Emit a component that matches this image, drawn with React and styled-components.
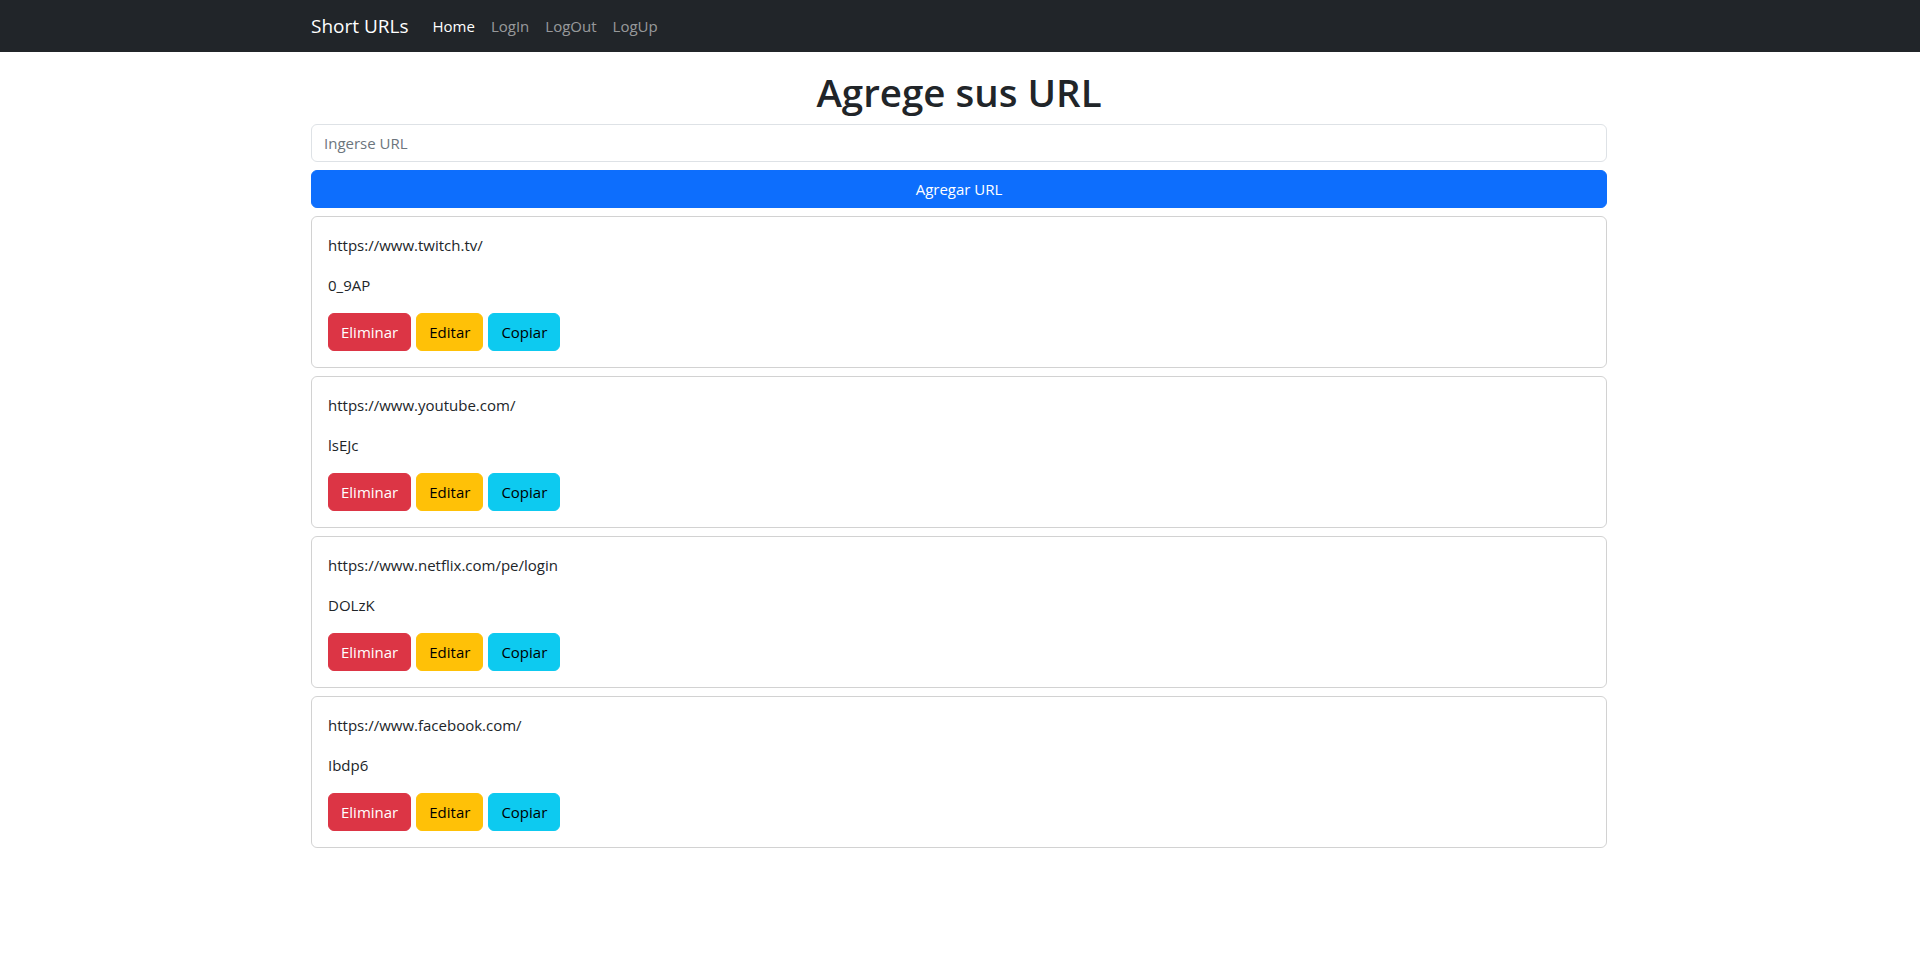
import React, { useState } from 'react';
import styled, { createGlobalStyle } from 'styled-components';

const GlobalStyle = createGlobalStyle`
  *, *::before, *::after {
    box-sizing: border-box;
  }

  body {
    margin: 0;
    background: #fff;
    color: #212529;
    font-family: "Segoe UI", "Open Sans", "Noto Sans", sans-serif;
    font-size: 15px;
    line-height: 24px;
  }
`;

const Navbar = styled.nav`
  height: 52px;
  background-color: #212529;
  display: flex;
  align-items: center;
`;

const Container = styled.div`
  width: 1296px;
  margin: 0 0 0 calc(50% - 649px);
`;

const NavInner = styled(Container)`
  display: flex;
  align-items: center;
`;

const Brand = styled.a`
  color: #fff;
  font-size: 19px;
  line-height: 30px;
  margin-right: 16px;
  text-decoration: none;
  cursor: pointer;
`;

const NavList = styled.div`
  display: flex;
  align-items: center;
`;

const NavLink = styled.a`
  padding: 8px;
  color: ${props => (props.$active ? '#fff' : 'rgba(255, 255, 255, 0.55)')};
  text-decoration: none;
  cursor: pointer;

  &:hover {
    color: rgba(255, 255, 255, 0.75);
  }
`;

const Main = styled(Container)`
  display: flex;
  flex-direction: column;
  gap: 8px;
  padding-top: 16px;
`;

const Title = styled.h1`
  margin: 0;
  text-align: center;
  font-size: 38.5px;
  font-weight: 600;
  line-height: 48px;
`;

const Input = styled.input`
  height: 38px;
  padding: 6px 12px;
  font: inherit;
  color: #212529;
  border: 1px solid #dee2e6;
  border-radius: 6px;
  outline: 0;

  &::placeholder {
    color: #6c757d;
  }

  &:focus {
    border-color: #86b7fe;
    box-shadow: 0 0 0 4px rgba(13, 110, 253, 0.25);
  }
`;

const colors = {
  primary: { bg: '#0d6efd', fg: '#fff' },
  danger: { bg: '#dc3545', fg: '#fff' },
  warning: { bg: '#ffc107', fg: '#000' },
  info: { bg: '#0dcaf0', fg: '#000' },
};

const Button = styled.button`
  height: 38px;
  padding: 6px 12px;
  font: inherit;
  line-height: 24px;
  border: 1px solid ${props => colors[props.$variant].bg};
  border-radius: 6px;
  background-color: ${props => colors[props.$variant].bg};
  color: ${props => colors[props.$variant].fg};
  cursor: pointer;
  width: ${props => (props.$block ? '100%' : 'auto')};
`;

const Card = styled.div`
  border: 1px solid rgba(0, 0, 0, 0.175);
  border-radius: 6px;
  padding: 16px;
`;

const Line = styled.p`
  margin: 0 0 16px;
`;

const Actions = styled.div`
  display: flex;
  gap: 5px;
`;

const initialUrls = [
  { origin: 'https://www.twitch.tv/', nanoid: '0_9AP' },
  { origin: 'https://www.youtube.com/', nanoid: 'lsEJc' },
  { origin: 'https://www.netflix.com/pe/login', nanoid: 'DOLzK' },
  { origin: 'https://www.facebook.com/', nanoid: 'Ibdp6' },
];

const App = () => {
  const [url, setUrl] = useState('');
  const [urls, setUrls] = useState(initialUrls);

  return (
    <>
      <GlobalStyle />
      <Navbar>
        <NavInner>
          <Brand>Short URLs</Brand>
          <NavList>
            <NavLink $active>Home</NavLink>
            <NavLink>LogIn</NavLink>
            <NavLink>LogOut</NavLink>
            <NavLink>LogUp</NavLink>
          </NavList>
        </NavInner>
      </Navbar>
      <Main>
        <Title>Agrege sus URL</Title>
        <Input
          placeholder="Ingerse URL"
          value={url}
          onChange={e => setUrl(e.target.value)}
        />
        <Button $variant="primary" $block>
          Agregar URL
        </Button>
        {urls.map(item => (
          <Card key={item.nanoid}>
            <Line>{item.origin}</Line>
            <Line>{item.nanoid}</Line>
            <Actions>
              <Button
                $variant="danger"
                onClick={() =>
                  setUrls(list => list.filter(u => u.nanoid !== item.nanoid))
                }
              >
                Eliminar
              </Button>
              <Button $variant="warning">Editar</Button>
              <Button $variant="info">Copiar</Button>
            </Actions>
          </Card>
        ))}
      </Main>
    </>
  );
};

export default App;
